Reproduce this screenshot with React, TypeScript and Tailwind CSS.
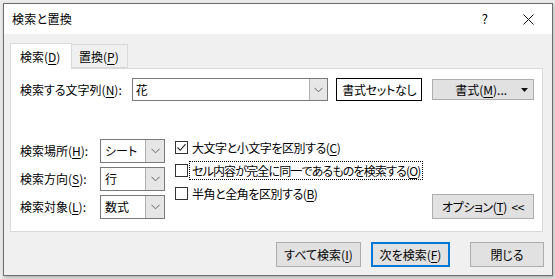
import React from "react";

const F = "[font-family:'Noto_Sans_CJK_JP','Noto_Sans',sans-serif]";

function Chevron() {
  return (
    <svg width="9" height="6" viewBox="0 0 9 6" className="block">
      <path d="M0.5 0.8 L4.5 4.8 L8.5 0.8" fill="none" stroke="#606060" strokeWidth="1" />
    </svg>
  );
}

function Select({ value }: { value: string }) {
  return (
    <div className="flex h-[24px] w-[65px] border border-[#7a7a7a] bg-white">
      <div className="flex flex-1 items-center pl-[4px] text-[12px]">{value}</div>
      <div className="flex w-[19px] items-center justify-center bg-[#e6e6e6] border-l border-[#b0b0b0]">
        <Chevron />
      </div>
    </div>
  );
}

function Check({ checked, label, focus }: { checked?: boolean; label: React.ReactNode; focus?: boolean }) {
  return (
    <div className="flex h-[23px] items-center whitespace-nowrap">
      <div className="flex h-[13px] w-[13px] shrink-0 items-center justify-center border border-[#333333] bg-white">
        {checked && (
          <svg width="11" height="11" viewBox="0 0 11 11">
            <path d="M1.5 5.5 L4.2 8.3 L9.5 2.2" fill="none" stroke="#222" strokeWidth="1.1" />
          </svg>
        )}
      </div>
      <div
        className={
          "ml-[1px] flex h-[19px] shrink-0 items-center px-[2px] text-[12px] whitespace-nowrap " +
          (focus ? "border border-dotted border-black tracking-[-0.85px]" : "border border-transparent tracking-[-0.45px]")
        }
      >
        {label}
      </div>
    </div>
  );
}

export default function App() {
  return (
    <div className={`w-[555px] h-[279px] bg-[#ececec] pl-[3px] pt-[3px] ${F} text-black [font-feature-settings:'palt']`}>
      <div className="flex h-[273px] w-[550px] flex-col border border-[#6e6e6e] bg-[#f0f0f0] shadow-[1px_2px_4px_rgba(0,0,0,0.25)]">
        {/* title bar */}
        <div className="flex h-[30px] items-center bg-white pl-[8px]">
          <div className="text-[12px] tracking-[0.3px]">検索と置換</div>
          <div className="ml-auto mr-[35px] text-[13px]">?</div>
          <div className="mr-[18px] flex items-center">
            <svg width="11" height="11" viewBox="0 0 11 11">
              <path d="M0.5 0.5 L10.5 10.5 M10.5 0.5 L0.5 10.5" stroke="#111" strokeWidth="1" />
            </svg>
          </div>
        </div>
        {/* body */}
        <div className="flex flex-1 flex-col pl-[6px] pr-[8px] pt-[8px]">
          {/* tabs */}
          <div className="flex h-[26px] items-end">
            <div className="relative z-10 -mb-[1px] flex h-[26px] w-[62px] items-start border border-b-0 border-[#d9d9d9] bg-white pl-[9px] pt-[4px] text-[12px]">
              検索(<u className="underline-offset-2">D</u>)
            </div>
            <div className="flex h-[24px] w-[56px] items-start border border-l-0 border-[#d9d9d9] bg-[#f0f0f0] pl-[7px] pt-[3px] text-[12px]">
              置換(<u className="underline-offset-2">P</u>)
            </div>
          </div>
          {/* panel */}
          <div className="flex h-[164px] w-[533px] flex-col border border-[#d9d9d9] bg-white pl-[9px] pr-[8px] pt-[9px]">
            <div className="flex h-[23px] items-center">
              <div className="w-[112px] text-[12px]">
                検索する文字列(<u className="underline-offset-2">N</u>):
              </div>
              <div className="flex h-[23px] w-[197px] border border-[#7a7a7a] bg-white">
                <div className="flex flex-1 items-center pl-[3px] text-[12px]">花</div>
                <div className="flex w-[18px] items-center justify-center bg-[#e6e6e6] border-l border-[#b0b0b0]">
                  <Chevron />
                </div>
              </div>
              <div className="ml-[8px] flex h-[23px] w-[86px] items-center justify-center border border-black bg-white text-[12px] tracking-[-0.3px]">
                書式セットなし
              </div>
              <div className="ml-[10px] flex h-[21px] w-[102px] items-center border border-[#adadad] bg-[#e1e1e1] text-[12px]">
                <span className="ml-[22px]">
                  書式(<u className="underline-offset-2">M</u>)...
                </span>
                <svg width="7" height="4" viewBox="0 0 7 4" className="ml-auto mr-[5px]">
                  <path d="M0 0 L7 0 L3.5 4 Z" fill="#111" />
                </svg>
              </div>
            </div>
            <div className="mt-[38px] flex">
              <div className="flex shrink-0 flex-col gap-[4px]">
                <div className="flex items-center">
                  <div className="w-[80px] text-[12px]">
                    検索場所(<u className="underline-offset-2">H</u>):
                  </div>
                  <Select value="シート" />
                </div>
                <div className="flex items-center">
                  <div className="w-[80px] text-[12px]">
                    検索方向(<u className="underline-offset-2">S</u>):
                  </div>
                  <Select value="行" />
                </div>
                <div className="flex items-center">
                  <div className="w-[80px] text-[12px]">
                    検索対象(<u className="underline-offset-2">L</u>):
                  </div>
                  <Select value="数式" />
                </div>
              </div>
              <div className="ml-[10px] -mt-[3px] flex min-w-0 flex-1 flex-col">
                <Check checked label={<span>大文字と小文字を区別する(<u className="underline-offset-2">C</u>)</span>} />
                <Check focus label={<span>セル内容が完全に同一であるものを検索する(<u className="underline-offset-2">O</u>)</span>} />
                <Check label={<span>半角と全角を区別する(<u className="underline-offset-2">B</u>)</span>} />
              </div>
              <div className="flex shrink-0 flex-col justify-end">
                <div className="flex h-[25px] w-[102px] items-center justify-center border border-[#adadad] bg-[#e1e1e1] text-[12px] whitespace-nowrap tracking-[-0.4px]">
                  オプション(<u className="underline-offset-2">T</u>)&nbsp;&nbsp;&lt;&lt;
                </div>
              </div>
            </div>
          </div>
          {/* bottom buttons */}
          <div className="mt-[10px] flex justify-end gap-[10px]">
            <div className="flex h-[25px] w-[85px] items-center justify-center border border-[#adadad] bg-[#e1e1e1] text-[12px]">
              すべて検索(<u className="underline-offset-2">I</u>)
            </div>
            <div className="flex h-[25px] w-[79px] items-center justify-center border-2 border-[#0078d7] bg-[#e1e1e1] text-[12px]">
              次を検索(<u className="underline-offset-2">F</u>)
            </div>
            <div className="ml-[10px] flex h-[25px] w-[74px] items-center justify-center border border-[#adadad] bg-[#e1e1e1] text-[12px]">
              閉じる
            </div>
          </div>
        </div>
      </div>
    </div>
  );
}
